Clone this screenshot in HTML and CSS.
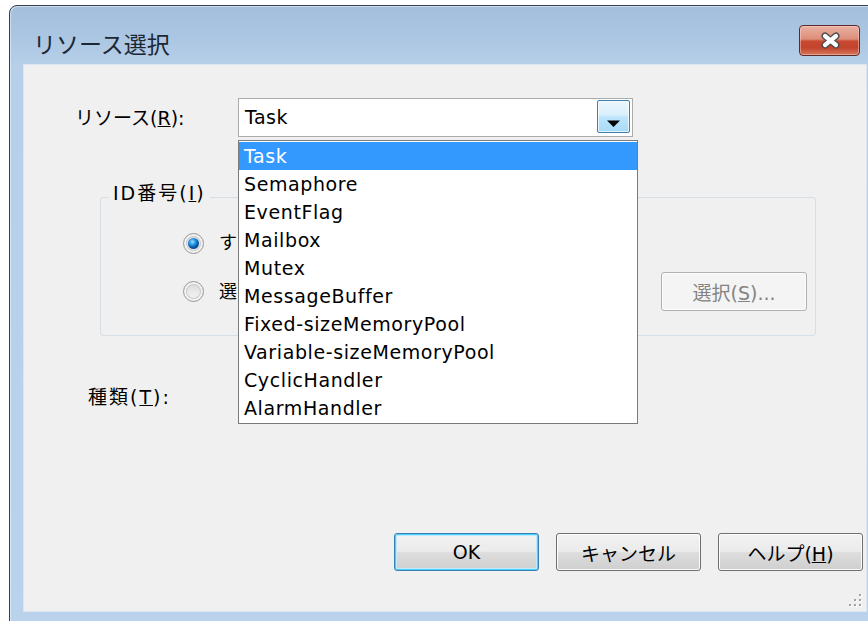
FILE: index.html
```html
<!DOCTYPE html>
<html lang="ja">
<head>
<meta charset="utf-8">
<title>リソース選択</title>
<link rel="stylesheet" href="styles.css">
</head>
<body>
<div class="window">
  <div class="titlebar">
    <span class="title">リソース選択</span>
    <button class="close" type="button" aria-label="閉じる">
      <svg width="61" height="31" viewBox="0 0 61 31">
        <path d="M26 11 L37 20 M37 11 L26 20" stroke="#4d4d4d" stroke-width="7" stroke-linecap="round"/>
        <path d="M26 11 L37 20 M37 11 L26 20" stroke="#ffffff" stroke-width="4.2" stroke-linecap="round"/>
      </svg>
    </button>
  </div>

  <div class="client">
    <div class="resource-row">
      <label class="res-label">リソース(<u>R</u>):</label>
      <div class="combo">
        <span class="combo-value">Task</span>
        <span class="combo-btn">
          <svg width="31" height="31" viewBox="0 0 31 31"><path d="M9 19.5 H22 L15.5 26 Z" fill="#000"/></svg>
        </span>
        <ul class="dropdown">
          <li class="selected">Task</li>
          <li>Semaphore</li>
          <li>EventFlag</li>
          <li>Mailbox</li>
          <li>Mutex</li>
          <li>MessageBuffer</li>
          <li>Fixed-sizeMemoryPool</li>
          <li>Variable-sizeMemoryPool</li>
          <li>CyclicHandler</li>
          <li>AlarmHandler</li>
        </ul>
      </div>
    </div>

    <div class="group">
      <span class="legend">ID番号(<u>I</u>)</span>
      <div class="radio-row">
        <span class="radio checked"></span>
        <span class="radio-text">す</span>
      </div>
      <div class="radio-row second">
        <span class="radio"></span>
        <span class="radio-text">選</span>
        <button class="btn btn-select" type="button" disabled>選択(<u>S</u>)...</button>
      </div>
    </div>

    <div class="type-row">種類(<u>T</u>):</div>

    <div class="actions">
      <button class="btn default" type="button">OK</button>
      <button class="btn" type="button">キャンセル</button>
      <button class="btn" type="button">ヘルプ(<u>H</u>)</button>
    </div>

    <svg class="grip" width="16" height="16" viewBox="0 0 16 16">
      <g fill="#ffffff">
        <rect x="13" y="3" width="2" height="2"/>
        <rect x="8" y="8" width="2" height="2"/><rect x="13" y="8" width="2" height="2"/>
        <rect x="3" y="13" width="2" height="2"/><rect x="8" y="13" width="2" height="2"/><rect x="13" y="13" width="2" height="2"/>
      </g>
      <g fill="#a3a3a3">
        <rect x="12" y="2" width="2" height="2"/>
        <rect x="7" y="7" width="2" height="2"/><rect x="12" y="7" width="2" height="2"/>
        <rect x="2" y="12" width="2" height="2"/><rect x="7" y="12" width="2" height="2"/><rect x="12" y="12" width="2" height="2"/>
      </g>
    </svg>
  </div>
</div>
</body>
</html>
```

FILE: styles.css
```css
* { box-sizing: border-box; }

html, body {
  margin: 0;
  height: 100%;
}

body {
  background: #ffffff;
  overflow: hidden;
  font-family: "DejaVu Sans", "Noto Sans CJK JP", sans-serif;
}

/* window frame */
.window {
  margin: 5px 0 0 9px;
  width: 872px;
  height: 640px;
  border: 1px solid #3a4049;
  border-radius: 8px 8px 0 0;
  background: linear-gradient(180deg, #a3bfdc 0px, #abc6e2 30px, #b7cfe9 60px, #bad2eb 100%);
  box-shadow: inset 1px 1px 0 rgba(255, 255, 255, 0.45);
  display: flex;
  flex-direction: column;
}

.titlebar {
  height: 59px;
  flex: none;
  display: flex;
  align-items: flex-start;
  padding-left: 23px;
}

.title {
  margin-top: 22px;
  font-family: "Noto Sans CJK JP", sans-serif;
  font-size: 23px;
  line-height: 30px;
  color: #1c2734;
}

.close {
  margin: 19px 20px 0 auto;
  width: 61px;
  height: 31px;
  padding: 0;
  border: 1px solid #5e2b2a;
  border-radius: 4px;
  background: linear-gradient(180deg, #eab1a3 0%, #dc8e79 45%, #c94a31 52%, #c2442c 75%, #d6785d 100%);
  box-shadow: inset 0 0 0 1px rgba(255, 220, 210, 0.45);
  display: flex;
  align-items: center;
  justify-content: center;
}

.close svg { display: block; margin: -1px; }

/* dialog client area */
.client {
  position: relative;
  margin-left: 14px;
  width: 842px;
  height: 546px;
  flex: none;
  background: #f0f0f0;
  box-shadow: 0 0 0 1px #dbe6f2;
  display: flex;
  flex-direction: column;
  font-size: 19px;
  color: #000;
}

.resource-row {
  display: flex;
  align-items: center;
  margin-top: 33px;
  padding-left: 51px;
}

.res-label {
  width: 163px;
  line-height: 24px;
}

.combo {
  position: relative;
  width: 395px;
  height: 39px;
  border: 1px solid #acacac;
  background: #ffffff;
  display: flex;
  align-items: flex-start;
  padding-left: 6px;
}

.combo-value {
  line-height: 36px;
  letter-spacing: 0.5px;
}

.combo-btn {
  margin: 1px 2px 0 auto;
  width: 33px;
  height: 33px;
  border: 1px solid #3c7fb1;
  border-radius: 2px;
  background: linear-gradient(180deg, #eaf6fd 0%, #d9f0fc 45%, #bee6fd 52%, #a7d9f5 100%);
  box-shadow: inset 0 0 0 1px rgba(255, 255, 255, 0.7);
}

.combo-btn svg { display: block; }

/* open drop-down list of the combo */
.dropdown {
  position: absolute;
  left: -1px;
  top: 41px;
  width: 400px;
  margin: 0;
  padding: 1px 0;
  list-style: none;
  background: #ffffff;
  border: 1px solid #7a7a7a;
  z-index: 2;
}

.dropdown li {
  height: 28px;
  line-height: 28px;
  padding-left: 5px;
  white-space: nowrap;
  letter-spacing: 0.6px;
}

.dropdown li.selected {
  background: #3399ff;
  color: #ffffff;
}

/* group box */
.group {
  position: relative;
  margin: 60px 0 0 76px;
  width: 716px;
  height: 139px;
  border: 1px solid #d5dfe5;
  border-radius: 3px;
  padding: 33px 8px 0 82px;
}

.legend {
  position: absolute;
  top: -17px;
  left: 8px;
  padding: 0 4px;
  line-height: 24px;
  letter-spacing: 2px;
  background: #f0f0f0;
}

.radio-row {
  display: flex;
  align-items: center;
  height: 24px;
}

.radio-row.second {
  margin-top: 17px;
  height: 39px;
}

.radio-text {
  font-size: 18px;
  line-height: 24px;
}

.radio {
  flex: none;
  width: 21px;
  height: 21px;
  margin-right: 15px;
  border-radius: 50%;
  border: 1px solid #9a9a9a;
  background: linear-gradient(180deg, #dadada 0%, #f6f6f6 100%);
  box-shadow: inset 0 0 0 2px #f3f3f3, inset 0 0 0 3px #c8c8c8;
  display: flex;
  align-items: center;
  justify-content: center;
}

.radio.checked::before {
  content: "";
  width: 11px;
  height: 11px;
  border-radius: 50%;
  background: radial-gradient(circle at 40% 35%, #9be0ff 0, #3aa4ec 2.5px, #1372c6 4.5px, #0b4f95 6px);
}

/* push buttons */
.btn {
  width: 145px;
  height: 38px;
  padding: 0;
  border: 1px solid #707070;
  border-radius: 3px;
  background: linear-gradient(180deg, #f2f2f2 0%, #ebebeb 48%, #dddddd 52%, #cfcfcf 100%);
  box-shadow: inset 0 0 0 1px #fbfbfb;
  font-family: "DejaVu Sans", "Noto Sans CJK JP", sans-serif;
  font-size: 19px;
  color: #000;
}

.btn.default {
  border-color: #3c7fb1;
  box-shadow: inset 0 0 0 1px #48d0fb, inset 0 0 0 2px #bdeafd;
}

.btn-select {
  margin-left: auto;
  width: 146px;
  height: 39px;
  border-color: #adb2b5;
  background: #f4f4f4;
  box-shadow: inset 0 0 0 1px #fcfcfc;
  color: #838383;
}

.type-row {
  margin: 49px 0 0 64px;
  line-height: 24px;
  letter-spacing: 2px;
}

.actions {
  margin-top: auto;
  padding: 0 3px 40px 0;
  display: flex;
  justify-content: flex-end;
  gap: 17px;
}

.grip {
  position: absolute;
  right: 3px;
  bottom: 3px;
}
```
